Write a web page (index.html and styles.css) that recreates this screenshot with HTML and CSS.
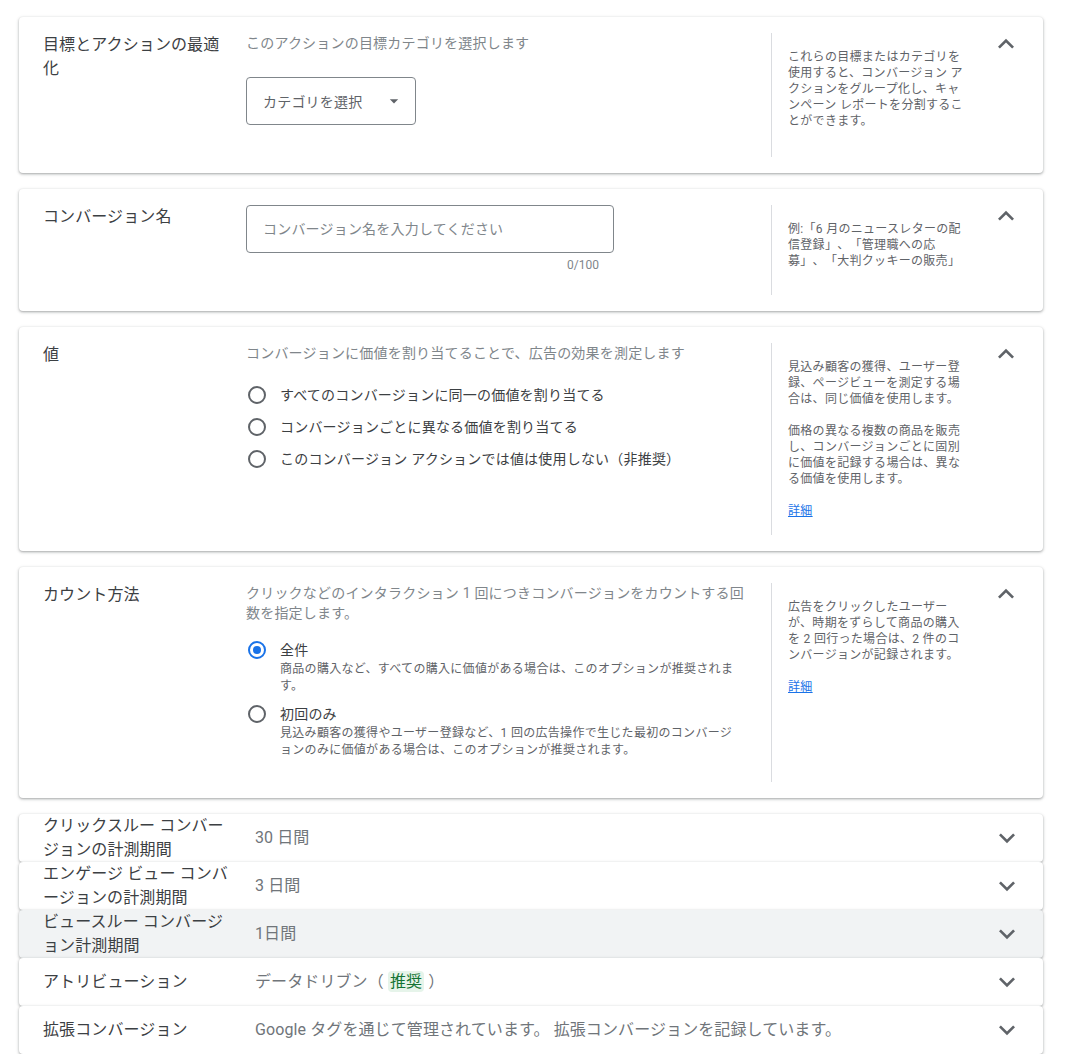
FILE: index.html
```html
<!DOCTYPE html>
<html lang="ja">
<head>
<meta charset="utf-8">
<title>コンバージョン アクションの設定</title>
<link rel="stylesheet" href="styles.css">
</head>
<body>
<main class="page">

  <section class="card panel">
    <h2 class="panel-title">目標とアクションの最適化</h2>
    <div class="panel-main">
      <p class="desc">このアクションの目標カテゴリを選択します</p>
      <div class="select">
        <span>カテゴリを選択</span>
        <svg class="caret" width="20" height="20" viewBox="0 0 24 24"><path d="M7 10l5 5 5-5z"/></svg>
      </div>
    </div>
    <aside class="panel-help">
      <p>これらの目標またはカテゴリを使用すると、コンバージョン アクションをグループ化し、キャンペーン レポートを分割することができます。</p>
    </aside>
    <button class="toggle" type="button" aria-label="閉じる">
      <svg width="32" height="32" viewBox="0 0 24 24"><path d="M12 8l-6 6 1.41 1.41L12 10.83l4.59 4.58L18 14z"/></svg>
    </button>
  </section>

  <section class="card panel">
    <h2 class="panel-title">コンバージョン名</h2>
    <div class="panel-main">
      <div class="text-field">
        <input type="text" placeholder="コンバージョン名を入力してください">
      </div>
      <div class="counter">0/100</div>
    </div>
    <aside class="panel-help">
      <p>例:「6 月のニュースレターの配信登録」、「管理職への応募」、「大判クッキーの販売」</p>
    </aside>
    <button class="toggle" type="button" aria-label="閉じる">
      <svg width="32" height="32" viewBox="0 0 24 24"><path d="M12 8l-6 6 1.41 1.41L12 10.83l4.59 4.58L18 14z"/></svg>
    </button>
  </section>

  <section class="card panel">
    <h2 class="panel-title">値</h2>
    <div class="panel-main">
      <p class="desc">コンバージョンに価値を割り当てることで、広告の効果を測定します</p>
      <div class="radio-group">
        <label class="option"><span class="radio"></span><span class="option-text"><span class="option-label">すべてのコンバージョンに同一の価値を割り当てる</span></span></label>
        <label class="option"><span class="radio"></span><span class="option-text"><span class="option-label">コンバージョンごとに異なる価値を割り当てる</span></span></label>
        <label class="option"><span class="radio"></span><span class="option-text"><span class="option-label">このコンバージョン アクションでは値は使用しない（非推奨）</span></span></label>
      </div>
    </div>
    <aside class="panel-help">
      <p>見込み顧客の獲得、ユーザー登録、ページビューを測定する場合は、同じ価値を使用します。</p>
      <p>価格の異なる複数の商品を販売し、コンバージョンごとに固別に価値を記録する場合は、異なる価値を使用します。</p>
      <a class="help-link" href="#">詳細</a>
    </aside>
    <button class="toggle" type="button" aria-label="閉じる">
      <svg width="32" height="32" viewBox="0 0 24 24"><path d="M12 8l-6 6 1.41 1.41L12 10.83l4.59 4.58L18 14z"/></svg>
    </button>
  </section>

  <section class="card panel">
    <h2 class="panel-title">カウント方法</h2>
    <div class="panel-main panel-main--padded">
      <p class="desc">クリックなどのインタラクション 1 回につきコンバージョンをカウントする回数を指定します。</p>
      <div class="radio-group radio-group--detailed">
        <label class="option"><span class="radio radio--checked"></span><span class="option-text"><span class="option-label">全件</span><span class="option-sub">商品の購入など、すべての購入に価値がある場合は、このオプションが推奨されます。</span></span></label>
        <label class="option"><span class="radio"></span><span class="option-text"><span class="option-label">初回のみ</span><span class="option-sub">見込み顧客の獲得やユーザー登録など、1 回の広告操作で生じた最初のコンバージョンのみに価値がある場合は、このオプションが推奨されます。</span></span></label>
      </div>
    </div>
    <aside class="panel-help">
      <p>広告をクリックしたユーザーが、時期をずらして商品の購入を 2 回行った場合は、2 件のコンバージョンが記録されます。</p>
      <a class="help-link" href="#">詳細</a>
    </aside>
    <button class="toggle" type="button" aria-label="閉じる">
      <svg width="32" height="32" viewBox="0 0 24 24"><path d="M12 8l-6 6 1.41 1.41L12 10.83l4.59 4.58L18 14z"/></svg>
    </button>
  </section>

  <div class="summary">
    <div class="card row">
      <h2 class="row-title">クリックスルー コンバージョンの計測期間</h2>
      <div class="row-value">30 日間</div>
      <svg class="row-icon" width="32" height="32" viewBox="0 0 24 24"><path d="M16.59 8.59L12 13.170 7.41 8.59 6 10l6 6 6-6z"/></svg>
    </div>
    <div class="card row">
      <h2 class="row-title">エンゲージ ビュー コンバージョンの計測期間</h2>
      <div class="row-value">3 日間</div>
      <svg class="row-icon" width="32" height="32" viewBox="0 0 24 24"><path d="M16.59 8.59L12 13.17 7.41 8.59 6 10l6 6 6-6z"/></svg>
    </div>
    <div class="card row row--hover">
      <h2 class="row-title">ビュースルー コンバージョン計測期間</h2>
      <div class="row-value">1日間</div>
      <svg class="row-icon" width="32" height="32" viewBox="0 0 24 24"><path d="M16.59 8.59L12 13.17 7.41 8.59 6 10l6 6 6-6z"/></svg>
    </div>
    <div class="card row">
      <h2 class="row-title">アトリビューション</h2>
      <div class="row-value">データドリブン（ <span class="badge">推奨</span> ）</div>
      <svg class="row-icon" width="32" height="32" viewBox="0 0 24 24"><path d="M16.59 8.59L12 13.17 7.41 8.59 6 10l6 6 6-6z"/></svg>
    </div>
    <div class="card row">
      <h2 class="row-title">拡張コンバージョン</h2>
      <div class="row-value">Google タグを通じて管理されています。 拡張コンバージョンを記録しています。</div>
      <svg class="row-icon" width="32" height="32" viewBox="0 0 24 24"><path d="M16.59 8.59L12 13.17 7.41 8.59 6 10l6 6 6-6z"/></svg>
    </div>
  </div>

</main>
</body>
</html>
```

FILE: styles.css
```css
* {
  box-sizing: border-box;
}

html,
body {
  margin: 0;
  background: #ffffff;
}

body {
  font-family: Roboto, "Noto Sans CJK JP", sans-serif;
  color: #3c4043;
  /* keep full-width brackets and commas at full width */
  text-spacing-trim: space-all;
}

p,
h2 {
  margin: 0;
}

.page {
  width: 1043px;
  padding: 17px 0 0 19px;
  display: flex;
  flex-direction: column;
  gap: 16px;
}

/* card surface */
.card {
  background: #ffffff;
  border-radius: 4px;
  box-shadow: 0 1px 2px 0 rgba(60, 64, 67, 0.3), 0 1px 3px 1px rgba(60, 64, 67, 0.15);
}

/* expanded section */
.panel {
  display: flex;
  align-items: stretch;
  padding: 16px 20px 16px 24px;
}

.panel-title {
  width: 189px;
  margin-right: 14px;
  flex: none;
  font-size: 16px;
  line-height: 24px;
  font-weight: 400;
  letter-spacing: 0.1px;
  color: #3c4043;
  line-break: loose;
}

.panel-main {
  width: 502px;
  flex: none;
  margin-right: 23px;
}

.panel-main--padded {
  padding-bottom: 15px;
}

.desc {
  font-size: 14px;
  line-height: 20px;
  letter-spacing: 0.2px;
  color: #80868b;
}

.panel-help {
  width: 208px;
  flex: none;
  border-left: 1px solid #dadce0;
  padding: 16px 14px 8px 16px;
  font-size: 12px;
  line-height: 16px;
  letter-spacing: 0.3px;
  color: #5f6368;
}

.panel-help p {
  margin-bottom: 16px;
}

.help-link {
  display: block;
  margin-bottom: 8px;
  color: #1a73e8;
  text-decoration: underline;
}

.toggle {
  flex: none;
  width: 32px;
  height: 32px;
  margin: -5px 0 0 11px;
  padding: 0;
  border: 0;
  background: none;
  fill: #5f6368;
}

.toggle svg {
  display: block;
}

/* dropdown */
.select {
  margin: 24px 0 32px;
  width: 170px;
  height: 48px;
  border: 1px solid #80868b;
  border-radius: 4px;
  display: flex;
  align-items: center;
  justify-content: space-between;
  padding: 0 11px 0 16px;
  font-size: 14px;
  letter-spacing: 0.2px;
  color: #5f6368;
}

.caret {
  fill: #5f6368;
}

/* text field */
.text-field {
  width: 368px;
  height: 48px;
  border: 1px solid #80868b;
  border-radius: 4px;
  display: flex;
  align-items: center;
  padding: 0 16px;
}

.text-field input {
  width: 100%;
  border: 0;
  outline: 0;
  padding: 0;
  background: transparent;
  font-family: Roboto, "Noto Sans CJK JP", sans-serif;
  font-size: 14px;
  letter-spacing: 0.2px;
  color: #3c4043;
}

.text-field input::placeholder {
  color: #80868b;
}

.counter {
  width: 368px;
  margin: 4px 0 22px;
  padding-right: 15px;
  text-align: right;
  font-size: 12px;
  line-height: 16px;
  color: #80868b;
}

/* radio buttons */
.radio-group {
  margin-top: 16px;
}

.option {
  display: flex;
  align-items: flex-start;
  gap: 14px;
  padding: 6px 0 6px 2px;
}

.radio-group--detailed .option {
  padding: 1px 0 8px 2px;
}

.radio {
  flex: none;
  width: 18px;
  height: 18px;
  margin-top: 1px;
  border: 2px solid #5f6368;
  border-radius: 50%;
  display: flex;
  align-items: center;
  justify-content: center;
}

.radio--checked {
  border-color: #1a73e8;
}

.radio--checked::after {
  content: "";
  width: 8px;
  height: 8px;
  border-radius: 50%;
  background: #1a73e8;
}

.option-text {
  display: flex;
  flex-direction: column;
}

.option-label {
  font-size: 14px;
  line-height: 20px;
  letter-spacing: 0.2px;
  color: #3c4043;
}

.option-sub {
  max-width: 460px;
  margin-top: 1px;
  font-size: 12px;
  line-height: 17px;
  letter-spacing: 0.3px;
  color: #5f6368;
}

/* collapsed summary rows */
.summary {
  display: flex;
  flex-direction: column;
}

.row {
  display: flex;
  align-items: center;
  min-height: 48px;
  padding: 0 20px 0 24px;
}

.row--hover {
  background: #f1f3f4;
}

.row-title {
  width: 189px;
  margin-right: 14px;
  flex: none;
  font-size: 16px;
  line-height: 24px;
  font-weight: 400;
  letter-spacing: 0.1px;
  color: #3c4043;
  line-break: loose;
}

.row-value {
  flex: 1;
  padding-left: 9px;
  font-size: 16px;
  line-height: 24px;
  letter-spacing: 0.1px;
  color: #70757a;
}

.badge {
  background: #e6f4ea;
  color: #137333;
  border-radius: 4px;
  padding: 1px 2px;
}

.row-icon {
  flex: none;
  fill: #5f6368;
}
```
